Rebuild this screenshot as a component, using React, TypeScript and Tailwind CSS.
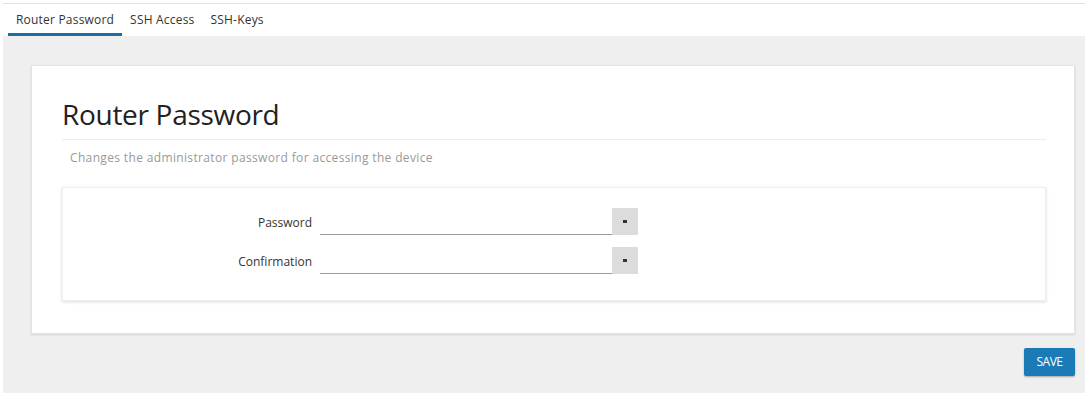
import React from "react";

function Field({ label }: { label: string }) {
  return (
    <div className="flex items-end h-[27px]">
      <div className="w-[257px] pr-[8px] text-right text-[12px] text-[#333] leading-none pb-[6px]">{label}</div>
      <div className="w-[292px] h-[27px] border-b border-[#9a9a9a]" />
      <div className="w-[26px] h-[27px] bg-[#dcdcdc] flex items-center justify-center">
        <div className="w-[4px] h-[3px] bg-[#333]" />
      </div>
    </div>
  );
}

export default function App() {
  return (
    <div className="w-[1090px] h-[395px] bg-white font-['Open_Sans',sans-serif] pt-[3px] overflow-hidden">
      <div className="border-t border-[#e2e2e2] mx-[3px] mr-[5px]">
        <div className="flex h-[32px] items-stretch pl-[5px] text-[12px] tracking-[0.2px]">
          <div className="px-[8px] flex items-center border-b-[3px] border-[#1a6fa6] text-[#333] pt-[2px]">Router Password</div>
          <div className="px-[8px] flex items-center text-[#333] border-b-[3px] border-transparent pt-[2px]">SSH Access</div>
          <div className="px-[8px] flex items-center text-[#333] border-b-[3px] border-transparent pt-[2px]">SSH-Keys</div>
        </div>
        <div className="bg-[#efefef] h-[357px] pt-[29px] pl-[28px] pr-[10px]">
          <div className="bg-white border border-[#e4e4e4] shadow-[0_1px_2px_rgba(0,0,0,0.12)] h-[269px] pt-[30px] pl-[30px] pr-[28px]">
            <h2 className="text-[28px] leading-[36px] text-[#222] tracking-[-0.3px]">Router Password</h2>
            <div className="border-b border-[#ececec] mt-[7px]" />
            <p className="text-[12px] text-[#999] pl-[8px] mt-[10px] leading-[16px] tracking-[0.35px]">Changes the administrator password for accessing the device</p>
            <div className="mt-[21px] bg-white border border-[#f0f0f0] shadow-[0_1px_3px_rgba(0,0,0,0.15)] h-[114px] pt-[20px] flex flex-col gap-[12px]">
              <Field label="Password" />
              <Field label="Confirmation" />
            </div>
          </div>
          <div className="flex justify-end mt-[14px]">
            <button className="bg-[#1b7bb6] text-white text-[12px] w-[51px] h-[28px] rounded-[2px] tracking-[-0.5px] shadow-[0_1px_2px_rgba(0,0,0,0.3)]">SAVE</button>
          </div>
        </div>
      </div>
    </div>
  );
}
